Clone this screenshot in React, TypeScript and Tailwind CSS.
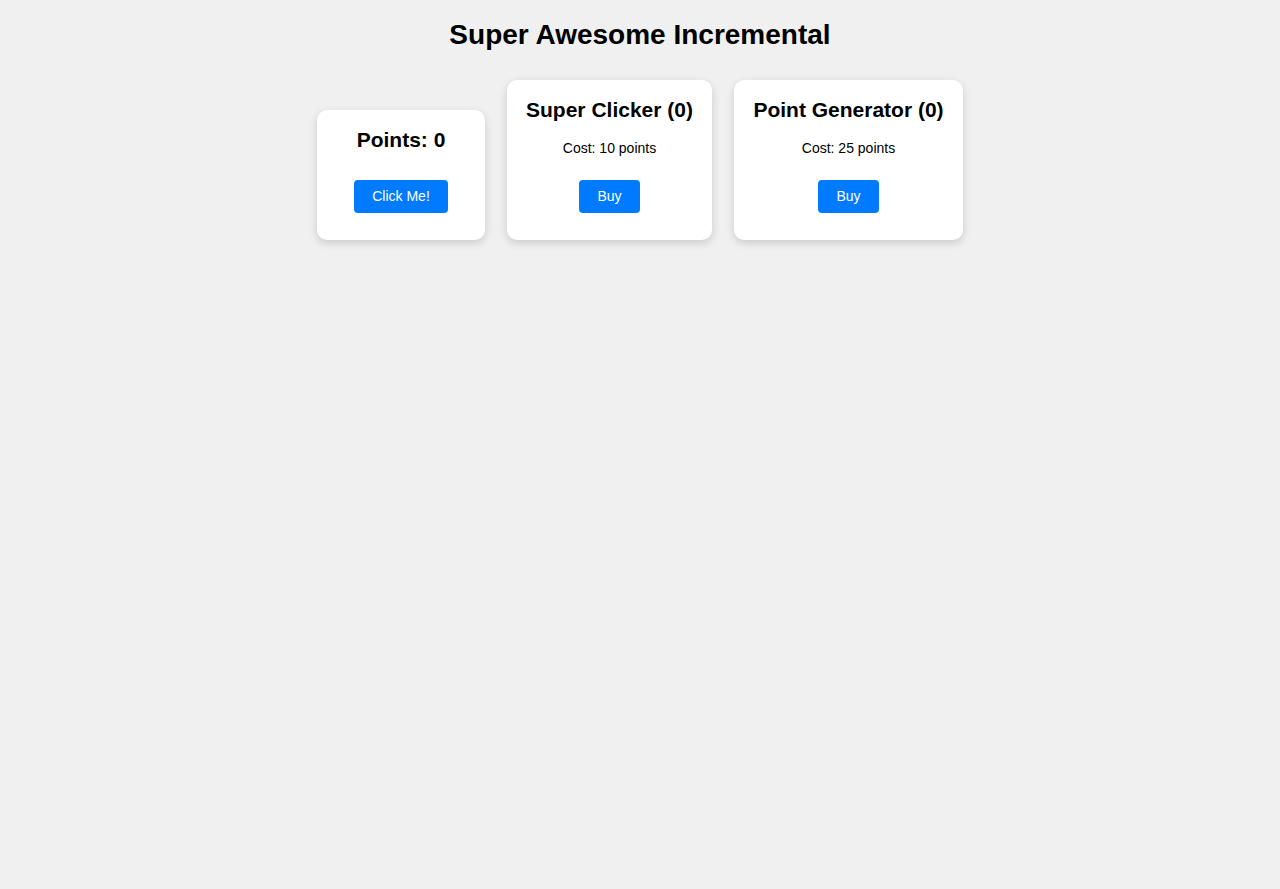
import { useState } from "react";

const font = { fontFamily: '"Liberation Sans", Arial, sans-serif' };

export default function App() {
  const [points, setPoints] = useState(0);
  const [clickers, setClickers] = useState(0);
  const [generators, setGenerators] = useState(0);

  return (
    <div className="min-h-screen bg-[#f0f0f0] text-black" style={font}>
      <h1 className="pt-[19px] text-center text-[28px] font-bold leading-[32px]">
        Super Awesome Incremental
      </h1>

      <div className="mt-[29px] flex items-end justify-center gap-[22px]">
        <div className="flex w-[168px] flex-col items-center rounded-[10px] bg-white px-[18px] pt-[18px] pb-[27px] text-center shadow-[0_3px_8px_rgba(0,0,0,0.16)]">
          <h2 className="text-[21px] font-bold leading-[24px]">Points: {points}</h2>
          <button
            onClick={() => setPoints(points + 1 + clickers)}
            className="mt-[28px] h-[33px] rounded-[4px] bg-[#007bff] px-[18px] text-[14px] text-white"
          >
            Click Me!
          </button>
        </div>

        <div className="flex w-[205px] flex-col items-center rounded-[10px] bg-white px-[18px] pt-[18px] pb-[27px] text-center shadow-[0_3px_8px_rgba(0,0,0,0.16)]">
          <h2 className="whitespace-nowrap text-[21px] font-bold leading-[24px]">
            Super Clicker ({clickers})
          </h2>
          <p className="mt-[18px] text-[14px] leading-[16px]">Cost: 10 points</p>
          <button
            onClick={() => {
              if (points >= 10) {
                setPoints(points - 10);
                setClickers(clickers + 1);
              }
            }}
            className="mt-[24px] h-[33px] rounded-[4px] bg-[#007bff] px-[18px] text-[14px] text-white"
          >
            Buy
          </button>
        </div>

        <div className="flex w-[229px] flex-col items-center rounded-[10px] bg-white px-[18px] pt-[18px] pb-[27px] text-center shadow-[0_3px_8px_rgba(0,0,0,0.16)]">
          <h2 className="whitespace-nowrap text-[21px] font-bold leading-[24px]">
            Point Generator ({generators})
          </h2>
          <p className="mt-[18px] text-[14px] leading-[16px]">Cost: 25 points</p>
          <button
            onClick={() => {
              if (points >= 25) {
                setPoints(points - 25);
                setGenerators(generators + 1);
              }
            }}
            className="mt-[24px] h-[33px] rounded-[4px] bg-[#007bff] px-[18px] text-[14px] text-white"
          >
            Buy
          </button>
        </div>
      </div>
    </div>
  );
}
